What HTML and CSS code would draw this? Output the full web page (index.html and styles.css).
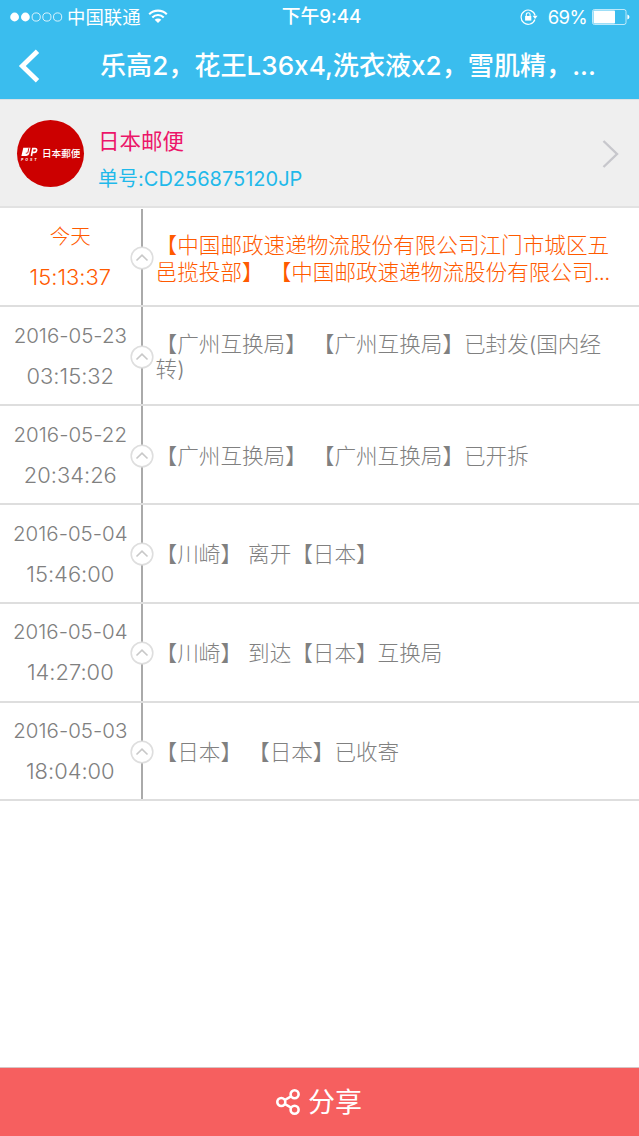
FILE: index.html
```html
<!DOCTYPE html>
<html lang="zh-CN">
<head>
  <meta charset="UTF-8">
  <meta name="viewport" content="width=device-width, initial-scale=1.0">
  <title>物流详情</title>
  <link rel="stylesheet" href="styles.css">
</head>
<body>
  <header class="header">
    <div class="status-bar">
      <div class="status-left">
        <svg class="signal" width="54" height="12" viewBox="0 0 54 12">
          <circle cx="4.6" cy="6" r="4.4" fill="#fff"/>
          <circle cx="15.4" cy="6" r="4.4" fill="#fff"/>
          <g fill="none" stroke="#fff" stroke-width="0.8">
            <circle cx="26.2" cy="6" r="4.1"/>
            <circle cx="36.9" cy="6" r="4.1"/>
            <circle cx="47.6" cy="6" r="4.1"/>
          </g>
        </svg>
        <span class="carrier">中国联通</span>
        <svg class="wifi" width="20" height="15" viewBox="0 0 20 15">
          <path d="M1.2 5.2a12.5 12.5 0 0 1 17.6 0M4.3 8.4a8.1 8.1 0 0 1 11.4 0" fill="none" stroke="#fff" stroke-width="2.1"/>
          <path d="M6.7 10.8a4.7 4.7 0 0 1 6.6 0L10 14z" fill="#fff"/>
        </svg>
      </div>
      <span class="clock">下午9:44</span>
      <div class="status-right">
        <svg class="lock" width="18" height="16" viewBox="0 0 18 16">
          <path d="M14.9 10.5A7.1 7.1 0 1 1 15.1 6.5" fill="none" stroke="#fff" stroke-width="1.2"/>
          <path d="M12.6 6.8h5L15.1 10z" fill="#fff"/>
          <rect x="5.1" y="7" width="6.2" height="4.6" fill="#fff"/>
          <path d="M6.3 7.3V5.6a1.9 1.9 0 0 1 3.8 0v1.7" fill="none" stroke="#fff" stroke-width="1.1"/>
        </svg>
        <span class="percent">69%</span>
        <svg class="battery" width="38" height="16" viewBox="0 0 38 16">
          <rect x="0.5" y="0.5" width="33.5" height="15" rx="2" fill="none" stroke="#fff" stroke-opacity="0.75" stroke-width="0.9"/>
          <rect x="1.5" y="1.5" width="21.5" height="13" rx="0.8" fill="#fff"/>
          <path d="M35.4 5.4q2.1 0.8 2.1 2.6t-2.1 2.6z" fill="#fff"/>
        </svg>
      </div>
    </div>
    <div class="nav">
      <svg class="back" width="22" height="34" viewBox="0 0 22 34">
        <path d="M19.5 2.2L4.3 17l15.2 14.8" fill="none" stroke="#fff" stroke-width="4.8"/>
      </svg>
      <h1 class="title">乐高2，花王L36x4,洗衣液x2，雪肌精，...</h1>
    </div>
  </header>

  <section class="company">
    <div class="logo">
      <svg class="logo-mark" width="17" height="11" viewBox="0 0 17 11">
        <path d="M2.3.8H9.5L8.3 6.5Q7.8 8.9 5.2 8.9H.4z" fill="#fff"/>
        <path d="M4.8 6.2h1.1q.9 0 1.1-1L7.8 1.2" fill="none" stroke="#c00" stroke-width="0.9"/>
        <path d="M10.4 9L11.8 1.6h2.2q2 0 1.6 1.9t-2.4 1.9h-1.8" fill="none" stroke="#fff" stroke-width="1.6"/>
      </svg>
      <span class="logo-name">日本郵便</span>
      <span class="logo-post">POST</span>
    </div>
    <div class="company-info">
      <div class="company-name">日本邮便</div>
      <div class="tracking">单号:<span class="number">CD256875120JP</span></div>
    </div>
    <svg class="more" width="18" height="30" viewBox="0 0 18 30">
      <path d="M1.5 2L15 15 1.5 28" fill="none" stroke="#c7c7cc" stroke-width="2.4"/>
    </svg>
  </section>

  <ul class="timeline">
    <li class="row latest">
      <div class="when"><span class="today">今天</span><span class="time">15:13:37</span></div>
      <div class="axis"><svg class="dot" viewBox="0 0 24 24"><circle cx="12" cy="12" r="10.8"/><path d="M6.5 14.5L12 9.2l5.5 5.3"/></svg></div>
      <div class="desc">【中国邮政速递物流股份有限公司江门市城区五<br>邑揽投部】 【中国邮政速递物流股份有限公司<span class="dots">...</span></div>
    </li>
    <li class="row">
      <div class="when"><span class="date">2016-05-23</span><span class="time">03:15:32</span></div>
      <div class="axis"><svg class="dot" viewBox="0 0 24 24"><circle cx="12" cy="12" r="10.8"/><path d="M6.5 14.5L12 9.2l5.5 5.3"/></svg></div>
      <div class="desc">【广州互换局】 【广州互换局】已封发(国内经<br>转)</div>
    </li>
    <li class="row">
      <div class="when"><span class="date">2016-05-22</span><span class="time">20:34:26</span></div>
      <div class="axis"><svg class="dot" viewBox="0 0 24 24"><circle cx="12" cy="12" r="10.8"/><path d="M6.5 14.5L12 9.2l5.5 5.3"/></svg></div>
      <div class="desc">【广州互换局】 【广州互换局】已开拆</div>
    </li>
    <li class="row">
      <div class="when"><span class="date">2016-05-04</span><span class="time">15:46:00</span></div>
      <div class="axis"><svg class="dot" viewBox="0 0 24 24"><circle cx="12" cy="12" r="10.8"/><path d="M6.5 14.5L12 9.2l5.5 5.3"/></svg></div>
      <div class="desc">【川崎】 离开【日本】</div>
    </li>
    <li class="row">
      <div class="when"><span class="date">2016-05-04</span><span class="time">14:27:00</span></div>
      <div class="axis"><svg class="dot" viewBox="0 0 24 24"><circle cx="12" cy="12" r="10.8"/><path d="M6.5 14.5L12 9.2l5.5 5.3"/></svg></div>
      <div class="desc">【川崎】 到达【日本】互换局</div>
    </li>
    <li class="row">
      <div class="when"><span class="date">2016-05-03</span><span class="time">18:04:00</span></div>
      <div class="axis"><svg class="dot" viewBox="0 0 24 24"><circle cx="12" cy="12" r="10.8"/><path d="M6.5 14.5L12 9.2l5.5 5.3"/></svg></div>
      <div class="desc">【日本】 【日本】已收寄</div>
    </li>
  </ul>

  <button class="share" type="button">
    <svg width="26" height="28" viewBox="0 0 26 28">
      <g fill="none" stroke="#fff" stroke-width="2.6">
        <circle cx="6.3" cy="14" r="4"/>
        <circle cx="19.6" cy="6.3" r="4"/>
        <circle cx="19.6" cy="21.7" r="4"/>
        <path d="M9.8 12L16.1 8.3M9.8 16l6.3 3.7"/>
      </g>
    </svg>
    <span class="share-text">分享</span>
  </button>
</body>
</html>
```

FILE: styles.css
```css
* {
  box-sizing: border-box;
}

body {
  margin: 0;
  height: 1136px;
  display: flex;
  flex-direction: column;
  background: #fff;
  font-family: Inter, "Noto Sans CJK SC", sans-serif;
  font-feature-settings: "calt" 0;
  text-spacing-trim: space-all;
  overflow: hidden;
}

svg {
  display: block;
  flex: none;
}

.header {
  height: 99px;
  flex: none;
  background: #3abdee;
  color: #fff;
}

.status-bar {
  height: 32px;
  padding: 0 9px 0 10px;
  display: grid;
  grid-template-columns: 1fr auto 1fr;
  align-items: center;
  line-height: 32px;
}

.status-left,
.status-right {
  display: flex;
  align-items: center;
}

.status-right {
  justify-content: flex-end;
}

.carrier {
  margin-left: 3px;
  font-size: 18.4px;
}

.wifi {
  margin-left: 7px;
}

.clock {
  padding: 1px 0 0 3px;
  font-size: 18.8px;
  font-weight: 500;
}

.percent {
  margin-left: 9px;
  font-size: 18.5px;
  letter-spacing: -0.6px;
}

.battery {
  margin-left: 5px;
}

.lock {
  margin-right: 1px;
}

.nav {
  height: 67px;
  padding-left: 18px;
  display: flex;
  align-items: center;
}

.title {
  margin: 0 0 0 60px;
  font-size: 26.1px;
  font-weight: 500;
  line-height: 40px;
  white-space: nowrap;
}

.company {
  height: 109px;
  flex: none;
  padding: 1px 19px 0 17px;
  display: flex;
  align-items: center;
  background: #efefef;
  border-top: 1px solid #d9e2e6;
  border-bottom: 2px solid #e2e2e2;
}

.logo {
  width: 67px;
  height: 67px;
  border-radius: 50%;
  background: #c00;
  color: #fff;
  display: grid;
  grid-template-columns: 17px auto;
  grid-template-rows: 11px 4px;
  align-content: center;
  column-gap: 4px;
  padding: 2px 0 0 4px;
}

.logo-name {
  font: 500 9.6px/12px "Noto Sans CJK JP", sans-serif;
  white-space: nowrap;
}

.logo-post {
  font: italic 700 3.5px/4px Inter, sans-serif;
  letter-spacing: 2px;
}

.company-info {
  margin-left: 14px;
  padding-top: 13px;
  flex: 1;
}

.company-name {
  color: #ec1569;
  font-size: 21.5px;
  line-height: 38px;
}

.tracking {
  color: #1fb9ea;
  font-size: 20px;
  line-height: 38px;
}

.timeline {
  list-style: none;
  margin: 0;
  padding: 0.6px 0 0;
}

.row {
  height: 98.8px;
  display: flex;
  border-bottom: 2px solid #dedede;
  color: #808080;
  font-weight: 300;
}

.latest {
  color: #ff5a00;
}

.when {
  width: 140.6px;
  display: flex;
  flex-direction: column;
  align-items: center;
  padding-top: 8.6px;
  font-size: 20.5px;
  line-height: 40px;
}

.time {
  font-size: 21.9px;
}

.axis {
  width: 2px;
  padding-top: 2px;
  display: flex;
  justify-content: center;
  align-items: center;
  background: #aaa;
}

.dot {
  width: 24px;
  height: 24px;
  fill: #fff;
  stroke: #dedede;
  stroke-width: 1.6;
}

.dot path {
  fill: none;
  stroke: #c8c8c8;
}

.desc {
  padding: 3px 0 0 13px;
  align-self: center;
  font-size: 21.6px;
  line-height: 25px;
  white-space: nowrap;
}

.latest .desc {
  padding-top: 4px;
  line-height: 27px;
}

.dots {
  letter-spacing: -0.8px;
}

.share {
  margin-top: auto;
  height: 69px;
  padding: 0 2px 0 0;
  border: none;
  border-top: 1px solid #d5c5c5;
  background: #f65f5f;
  color: #fff;
  display: flex;
  align-items: center;
  justify-content: center;
  gap: 7px;
  font-family: inherit;
  font-size: 27px;
}

.share-text {
  padding-bottom: 4px;
}
```
